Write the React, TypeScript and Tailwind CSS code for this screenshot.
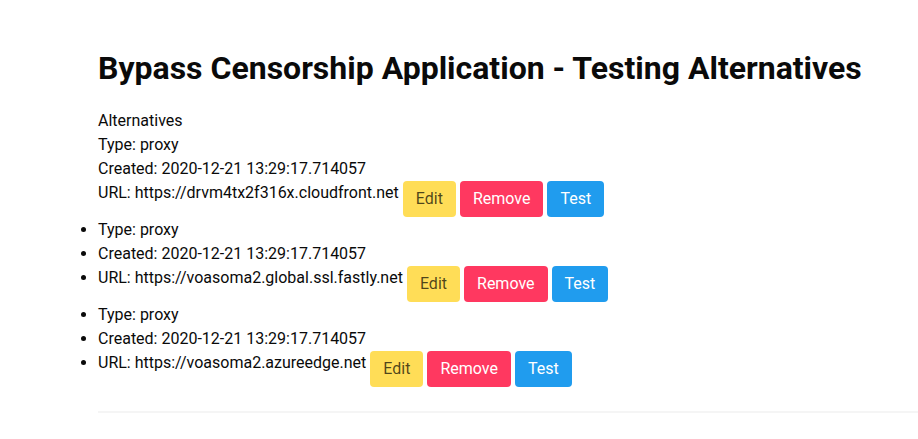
import React from "react";

const items = [
  { type: "proxy", created: "2020-12-21 13:29:17.714057", url: "https://drvm4tx2f316x.cloudfront.net", bullet: false },
  { type: "proxy", created: "2020-12-21 13:29:17.714057", url: "https://voasoma2.global.ssl.fastly.net", bullet: true },
  { type: "proxy", created: "2020-12-21 13:29:17.714057", url: "https://voasoma2.azureedge.net", bullet: true },
];

function Btn({ label, cls }: { label: string; cls: string }) {
  return (
    <button
      className={`inline-flex h-[36px] mb-px ml-1 px-[13px] items-center justify-center rounded-[4px] align-top text-[16px] leading-6 ${cls}`}
    >
      {label}
    </button>
  );
}

export default function App() {
  return (
    <div
      className="bg-white min-h-[439px] text-[#0a0a0a] text-[16px] leading-6 pt-[50px] pl-[98px]"
      style={{ fontFamily: "Roboto, 'Noto Sans', sans-serif" }}
    >
      <h1 className="text-[32px] leading-[36px] font-bold text-[#0a0a0a]">
        Bypass Censorship Application - Testing Alternatives
      </h1>
      <div className="mt-[23px]">
        <div>Alternatives</div>
        {items.map((it, i) => (
          <ul key={i} className={it.bullet ? "list-disc" : "list-none"}>
            <li>Type: {it.type}</li>
            <li>Created: {it.created}</li>
            <li>
              URL: {it.url}
              <Btn label="Edit" cls="bg-[#ffdd57] text-black/70" />
              <Btn label="Remove" cls="bg-[#ff3860] text-white" />
              <Btn label="Test" cls="bg-[#209cee] text-white" />
            </li>
          </ul>
        ))}
      </div>
      <div className="mt-[23px] h-[2px] bg-[#f5f5f5]" />
    </div>
  );
}
